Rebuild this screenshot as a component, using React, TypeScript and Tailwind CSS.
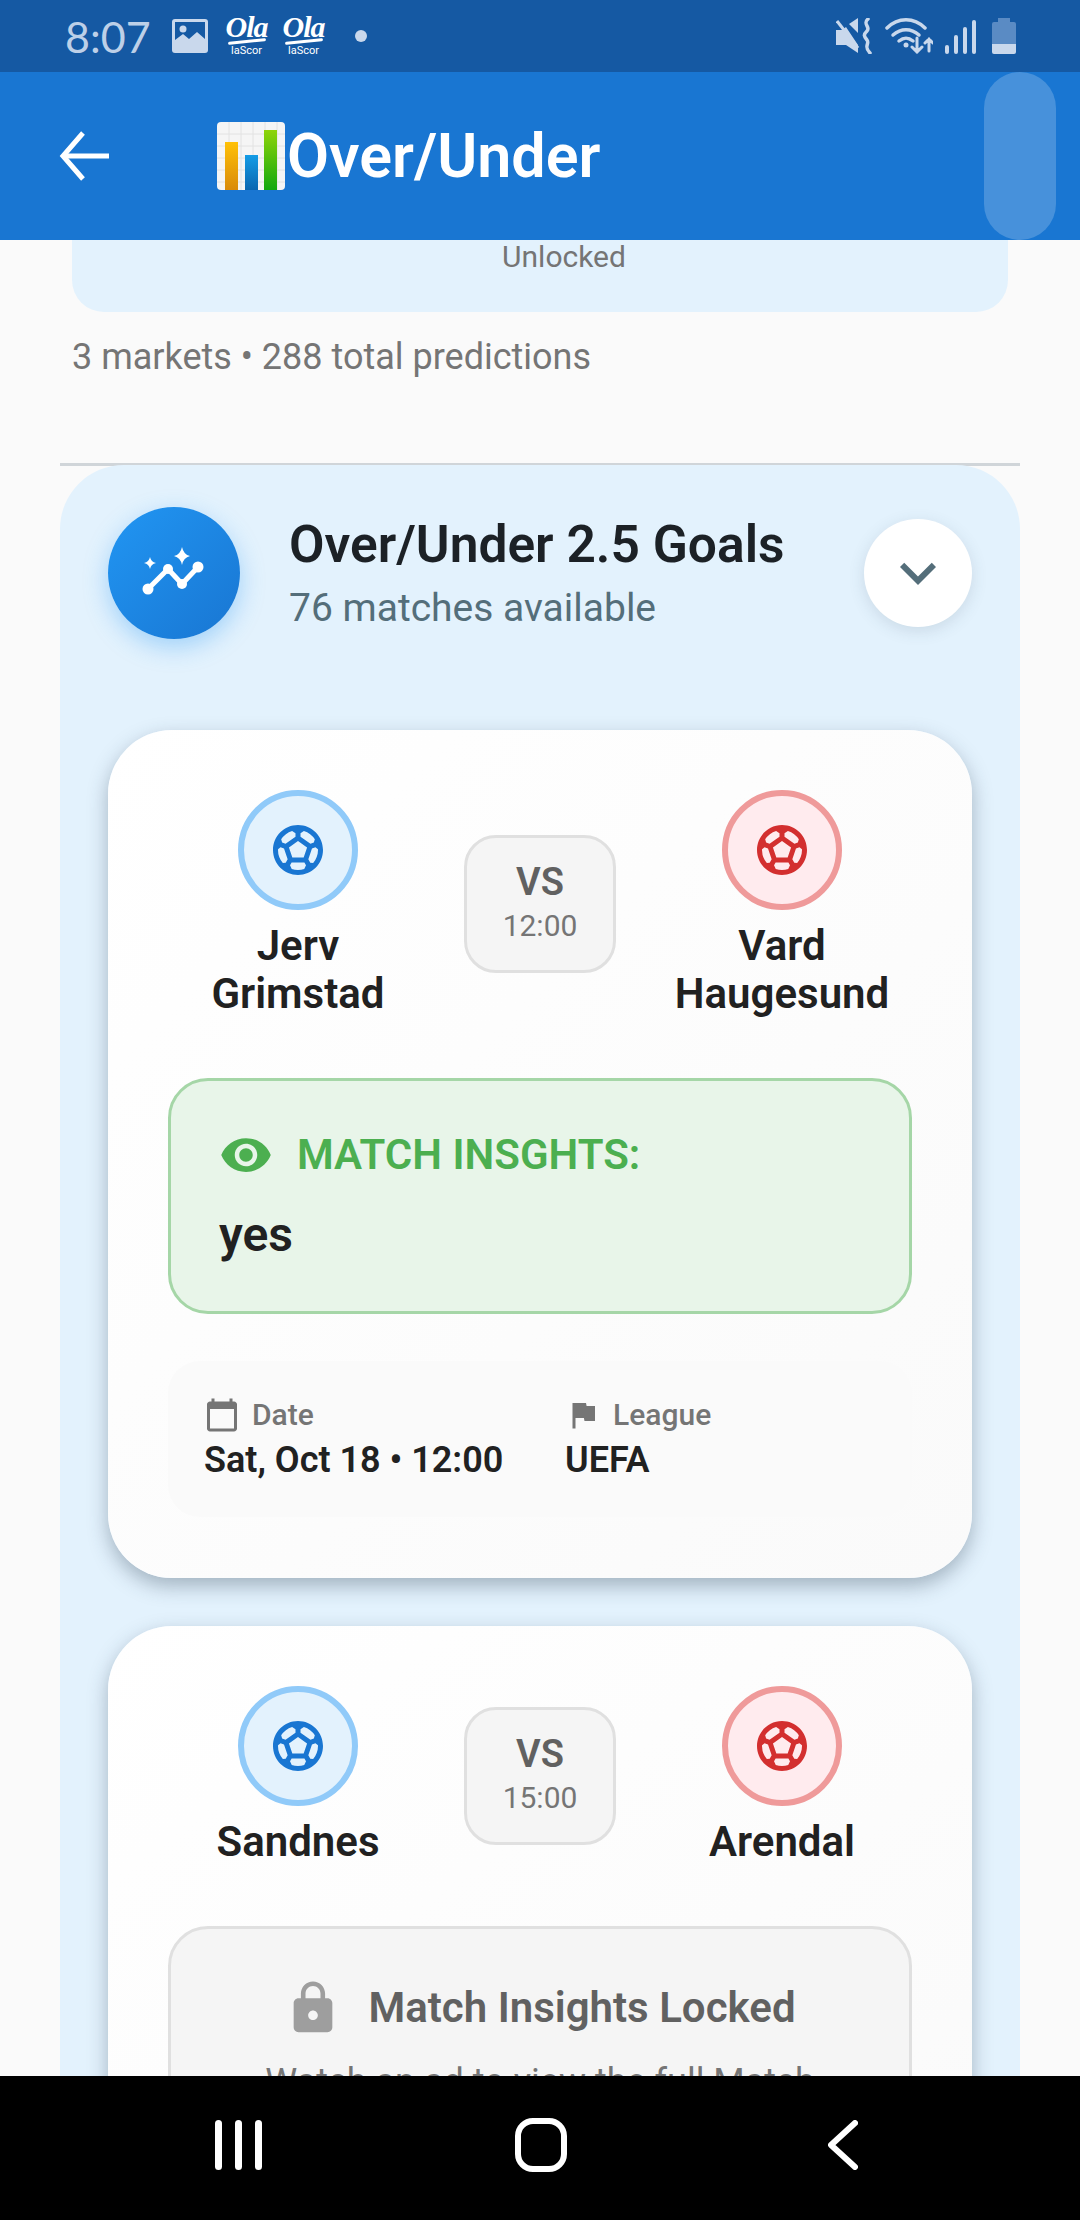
import { ReactNode } from "react";
import {
  MdCalendarToday,
  MdFlag,
  MdKeyboardArrowDown,
  MdLock,
  MdSportsSoccer,
  MdVisibility,
} from "react-icons/md";

const OlaBadge = () => (
  <div className="flex flex-col items-center w-[42px] h-[42px] text-white">
    <span className="font-['Liberation_Serif',serif] italic font-bold text-[30px] leading-[24px] tracking-[-1px]">Ola</span>
    <div className="mt-[1px] w-[38px] h-[3px] bg-white rounded-full -rotate-6" />
    <span className="mt-[2px] text-[11px] leading-[12px] whitespace-nowrap">laScor</span>
  </div>
);

const StatusBar = () => (
  <div className="h-[72px] shrink-0 bg-[#1559a3] flex items-center pl-[65px] pr-[64px] text-[#bdd0e8]">
    <span className="font-['Lato',sans-serif] text-[43px] leading-none">8:07</span>
    <svg className="ml-[21px]" width="36" height="34" viewBox="0 0 36 34">
      <rect width="36" height="34" rx="3" fill="#c9d8ec" />
      <rect x="3" y="3" width="30" height="28" fill="#1559a3" />
      <path d="M3 31V21l8-6 6 5 8-7 8 7v11z" fill="#c9d8ec" />
      <circle cx="11" cy="10" r="3.5" fill="#c9d8ec" />
    </svg>
    <div className="ml-[18px] flex gap-[15px]">
      <OlaBadge />
      <OlaBadge />
    </div>
    <div className="ml-[30px] w-[12px] h-[12px] rounded-full bg-[#c9d8ec]" />
    <div className="ml-auto flex items-center">
      <svg width="36" height="36" viewBox="0 0 36 36" fill="none">
        <path d="M0 12h6l4-3 12 18v8l-12-8H0z" fill="#c9d8ec" />
        <path d="M13 6l9-6v15z" fill="#c9d8ec" />
        <path d="M1 3l21 27" stroke="#c9d8ec" strokeWidth="3" />
        <path d="M32 1c-6 5 3 8-1 12s-3 5 0 9 -4 6 3 13" stroke="#c9d8ec" strokeWidth="3.5" strokeLinecap="round" />
      </svg>
      <svg className="ml-[13px]" width="48" height="36" viewBox="0 0 48 36" fill="none" stroke="#c9d8ec" strokeLinecap="round">
        <path d="M2 10C13 -1 29 -1 40 10" strokeWidth="3.5" />
        <path d="M8 17c8-7 18-7 26 0" strokeWidth="3.5" />
        <path d="M14 23c5-4 9-4 14 0" strokeWidth="3.5" />
        <circle cx="21" cy="27" r="2.5" fill="#c9d8ec" stroke="none" />
        <path d="M32 20v14m-5-5l5 5 5-5M44 33V21m-4 4l4-4 4 4" strokeWidth="3" />
      </svg>
      <svg className="ml-[12px]" width="31" height="36" viewBox="0 0 31 36" fill="#c9d8ec">
        <rect x="0" y="27" width="4" height="9" rx="2" />
        <rect x="9" y="17" width="4" height="19" rx="2" />
        <rect x="18" y="9" width="4" height="27" rx="2" />
        <rect x="27" y="2" width="4" height="34" rx="2" />
      </svg>
      <div className="ml-[16px] flex flex-col items-center">
        <div className="w-[12px] h-[4px] bg-[#5a8bc4]" />
        <div className="w-[24px] h-[22px] bg-[#5a8bc4] rounded-t-[2px]" />
        <div className="w-[24px] h-[10px] bg-[#c9d8ec] rounded-b-[2px]" />
      </div>
    </div>
  </div>
);

const AppBar = () => (
  <div className="relative h-[168px] shrink-0 bg-[#1976d2] flex items-center pl-[59px]">
    <svg width="50" height="50" viewBox="0 0 50 50" fill="none" stroke="white" strokeWidth="5">
      <path d="M50 25H4" />
      <path d="M24 2L4 25l20 23" />
    </svg>
    <svg className="ml-[108px]" width="68" height="68" viewBox="0 0 68 68">
      <defs>
        <linearGradient id="barA" x1="0" y1="0" x2="0" y2="1">
          <stop offset="0" stopColor="#ffc107" />
          <stop offset="1" stopColor="#d98a0a" />
        </linearGradient>
        <linearGradient id="barB" x1="0" y1="0" x2="0" y2="1">
          <stop offset="0" stopColor="#149ce6" />
          <stop offset="1" stopColor="#0a66b0" />
        </linearGradient>
        <linearGradient id="barC" x1="0" y1="0" x2="0" y2="1">
          <stop offset="0" stopColor="#8fd40a" />
          <stop offset="1" stopColor="#12a80e" />
        </linearGradient>
      </defs>
      <rect width="68" height="68" rx="4" fill="#f5f5f5" />
      <path d="M0 12h68M0 24h68M0 36h68M0 48h68M0 60h68M12 0v68M24 0v68M36 0v68M48 0v68M60 0v68" stroke="#e2e2e2" strokeWidth="1" />
      <rect x="8" y="20" width="13" height="48" fill="url(#barA)" />
      <rect x="28" y="33" width="13" height="35" fill="url(#barB)" />
      <rect x="47" y="8" width="13" height="60" fill="url(#barC)" />
    </svg>
    <span className="ml-[2px] font-['Roboto',sans-serif] font-semibold text-[61px] leading-none text-white">Over/Under</span>
    <div className="absolute right-[24px] top-0 w-[72px] h-[168px] rounded-full bg-white/20" />
  </div>
);

const TeamBadge = ({ name, tone }: { name: ReactNode; tone: "blue" | "red" }) => (
  <div className="flex flex-col items-center">
    <div
      className={
        tone === "blue"
          ? "w-[120px] h-[120px] rounded-full border-[6px] border-[#90caf9] bg-[#e3f2fd] flex items-center justify-center text-[#1976d2]"
          : "w-[120px] h-[120px] rounded-full border-[6px] border-[#ef9a9a] bg-[#ffebee] flex items-center justify-center text-[#d32f2f]"
      }
    >
      <MdSportsSoccer size={60} />
    </div>
    <div className="mt-[12px] text-center text-[42px] leading-[48px] font-semibold text-[#212121]">{name}</div>
  </div>
);

const MatchRow = ({ home, away, time }: { home: ReactNode; away: ReactNode; time: string }) => (
  <div className="grid grid-cols-[260px_1fr_260px] items-center">
    <TeamBadge name={home} tone="blue" />
    <div className="justify-self-center w-[152px] h-[138px] rounded-[32px] border-[3px] border-[#e0e0e0] bg-[#f5f5f5] flex flex-col items-center justify-center">
      <span className="-mt-[2px] text-[38px] leading-[44px] font-semibold text-[#616161]">VS</span>
      <span className="mt-[2px] text-[30px] leading-[40px] text-[#757575]">{time}</span>
    </div>
    <TeamBadge name={away} tone="red" />
  </div>
);

const MatchCard = ({ children }: { children: ReactNode }) => (
  <div className="rounded-[64px] bg-gradient-to-br from-white to-[#fafafa] px-[60px] pt-[60px] pb-[61px] shadow-[0_8px_20px_rgba(40,60,80,0.35)]">
    {children}
  </div>
);

const InfoCell = ({ icon, label, value, width }: { icon: ReactNode; label: string; value: string; width: string }) => (
  <div className={width}>
    <div className="flex items-center gap-[12px] h-[36px] text-[#757575]">
      {icon}
      <span className="text-[30px] leading-[36px] font-medium">{label}</span>
    </div>
    <div className="mt-[5px] text-[36px] leading-[44px] font-semibold text-[#212121] whitespace-nowrap">{value}</div>
  </div>
);

export default function App() {
  return (
    <div className="w-[1080px] h-[2220px] flex flex-col overflow-hidden bg-[#fafafa] font-['Roboto',sans-serif]">
      <StatusBar />
      <AppBar />

      <div className="flex-1 min-h-0 overflow-hidden">
        <div className="mx-[72px] h-[72px] pl-[48px] bg-[#e3f2fd] rounded-b-[32px] text-center text-[30px] leading-[34px] text-[#757575]">
          Unlocked
        </div>
        <p className="ml-[72px] mt-[21px] text-[36px] leading-[48px] text-[#757575]">3 markets • 288 total predictions</p>
        <div className="mx-[60px] mt-[82px] h-[3px] bg-[#d0d5d9]" />

        <section className="mx-[60px] px-[48px] pt-[42px] bg-[#e3f2fd] rounded-t-[64px] -mt-[1px]">
          {/* market header */}
          <div className="flex items-center">
            <div className="w-[132px] h-[132px] rounded-full bg-gradient-to-br from-[#2196f3] to-[#1976d2] shadow-[0_8px_24px_rgba(33,150,243,0.35)]">
              <svg width="132" height="132" viewBox="0 0 132 132" fill="white">
                <path d="M40 82L60 62L74 77L90 60" fill="none" stroke="white" strokeWidth="5" strokeLinejoin="round" />
                <circle cx="40" cy="82" r="5.5" />
                <circle cx="60" cy="62" r="5" />
                <circle cx="74" cy="77" r="5" />
                <circle cx="90" cy="60" r="5.5" />
                <path d="M74 40q1.500 7.500 8 9q-6.500 1.500-8 9q-1.500-7.500-8-9q6.500-1.500 8-9z" />
                <path d="M42 50q1 5 6 6q-5 1-6 6q-1-5-6-6q5-1 6-6z" />
              </svg>
            </div>
            <div className="ml-[49px] pt-[3px]">
              <div className="text-[51.5px] leading-[56px] font-semibold text-[#1c2126]">Over/Under 2.5 Goals</div>
              <div className="mt-[10px] text-[39px] leading-[50px] text-[#546e7a]">76 matches available</div>
            </div>
            <div className="ml-auto w-[108px] h-[108px] rounded-full bg-white flex items-center justify-center text-[#546e7a] shadow-[0_4px_16px_rgba(60,80,100,0.15)]">
              <MdKeyboardArrowDown size={72} />
            </div>
          </div>

          <div className="mt-[91px] flex flex-col gap-[48px]">
            <MatchCard>
              <MatchRow
                home={<>Jerv<br />Grimstad</>}
                away={<>Vard<br />Haugesund</>}
                time="12:00"
              />
              <div className="mt-[60px] h-[236px] rounded-[40px] border-[3px] border-[#a5d6a7] bg-[#e8f5e9] px-[48px] pt-[50px]">
                <div className="flex items-center gap-[24px] h-[48px]">
                  <MdVisibility size={54} className="text-[#4caf50]" />
                  <span className="text-[42px] leading-[48px] font-semibold text-[#4caf50]">MATCH INSGHTS:</span>
                </div>
                <div className="mt-[32px] text-[48px] leading-[48px] font-semibold text-[#212121]">yes</div>
              </div>
              <div className="mt-[47px] h-[156px] rounded-[32px] bg-[#fafafa] px-[36px] pt-[36px] flex">
                <InfoCell icon={<MdCalendarToday size={36} />} label="Date" value="Sat, Oct 18 • 12:00" width="w-[361px]" />
                <InfoCell icon={<MdFlag size={36} />} label="League" value="UEFA" width="w-[300px]" />
              </div>
            </MatchCard>

            <MatchCard>
              <MatchRow home="Sandnes" away="Arendal" time="15:00" />
              <div className="mt-[60px] rounded-[40px] border-[3px] border-[#e0e0e0] bg-[#f5f5f5] px-[48px] pt-[50px] pb-[48px]">
                <div className="flex items-center justify-center gap-[26px] h-[58px]">
                  <MdLock size={58} className="text-[#9e9e9e]" />
                  <span className="text-[42px] leading-[58px] font-semibold text-[#616161]">Match Insights Locked</span>
                </div>
                <p className="mt-[21px] text-center text-[36px] leading-[48px] text-[#757575]">Watch an ad to view the full Match Insights</p>
              </div>
            </MatchCard>
          </div>
        </section>
      </div>

      {/* system nav */}
      <div className="h-[144px] shrink-0 bg-black flex items-center pl-[215px] pb-[6px]">
        <div className="flex gap-[13px]">
          <div className="w-[7px] h-[50px] rounded-full bg-white" />
          <div className="w-[7px] h-[50px] rounded-full bg-white" />
          <div className="w-[7px] h-[50px] rounded-full bg-white" />
        </div>
        <div className="ml-[253px] w-[52px] h-[54px] rounded-[18px] border-[6px] border-white" />
        <svg className="ml-[261px]" width="30" height="50" viewBox="0 0 30 50" fill="none" stroke="white" strokeWidth="6" strokeLinecap="round" strokeLinejoin="round">
          <path d="M27 3L3 25l24 22" />
        </svg>
      </div>
    </div>
  );
}
